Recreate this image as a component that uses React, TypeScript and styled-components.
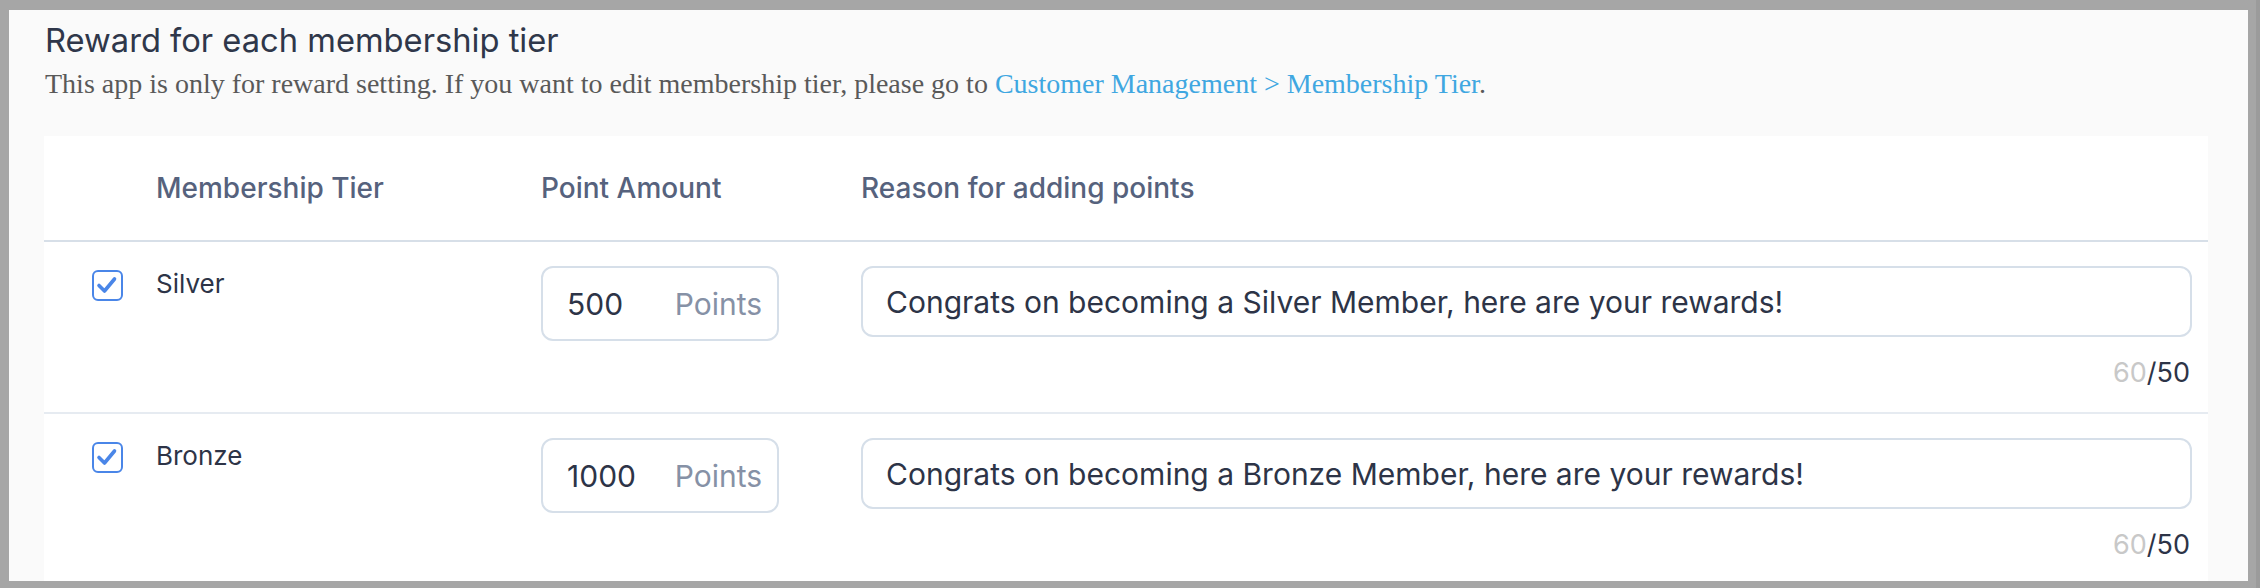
import React from 'react';
import styled, { createGlobalStyle } from 'styled-components';

const Global = createGlobalStyle`
  html, body { margin: 0; padding: 0; background: #a6a6a6; }
  body { width: 2260px; height: 588px; overflow: hidden; box-shadow: inset -4px 0 0 #9b9b9b; }
  * { box-sizing: border-box; }
`;

const SANS = `Inter, "Liberation Sans", Arial, sans-serif`;

const Frame = styled.div`
  margin: 10px 12px 0 9px;
  height: 571px;
  background: #fafafa;
  padding: 10px 40px 0 35px;
  overflow: hidden;
`;

const Title = styled.h1`
  margin: 0 0 0 1px;
  font-family: ${SANS};
  font-size: 32.7px;
  line-height: 40px;
  font-weight: 400;
  color: #2f374a;
`;

const Subtitle = styled.p`
  margin: 6px 0 0 1px;
  font-family: "Liberation Serif", "Times New Roman", serif;
  font-size: 28px;
  line-height: 36px;
  color: #595959;
`;

const Link = styled.a`
  color: #3fa7e1;
  text-decoration: none;
`;

const Card = styled.div`
  margin-top: 34px;
  background: #ffffff;
`;

const Grid = styled.div<{ $header?: boolean }>`
  display: grid;
  grid-template-columns: 64px 385px 320px 1fr;
  padding: ${(p) => (p.$header ? '0 16px 0 48px' : '24px 16px 19px 48px')};
  height: ${(p) => (p.$header ? '106px' : 'auto')};
  align-items: ${(p) => (p.$header ? 'center' : 'start')};
  border-bottom: 2px solid ${(p) => (p.$header ? '#d7dfe8' : '#e6ebf1')};
`;

const HeadCell = styled.div`
  font-family: ${SANS};
  font-size: 28px;
  line-height: 36px;
  font-weight: 500;
  color: #56627d;
`;

const CheckBox = styled.div`
  margin-top: 4px;
  width: 31px;
  height: 31px;
  border: 2px solid #4a86e8;
  border-radius: 6px;
  background: #fff;
  display: flex;
  align-items: center;
  justify-content: center;
`;

const TierName = styled.div`
  font-family: ${SANS};
  font-size: 26px;
  line-height: 36px;
  color: #2d3447;
`;

const PointBox = styled.div`
  width: 238px;
  height: 75px;
  border: 2px solid #d6dfe9;
  border-radius: 12px;
  display: flex;
  align-items: center;
  justify-content: space-between;
  padding: 0 15px 0 24px;
  font-family: ${SANS};
  font-size: 30px;
`;

const PointValue = styled.span`
  color: #2d3447;
`;

const PointUnit = styled.span`
  color: #8691a6;
`;

const ReasonCol = styled.div`
  display: flex;
  flex-direction: column;
`;

const ReasonBox = styled.div`
  height: 71px;
  border: 2px solid #d6dfe9;
  border-radius: 12px;
  display: flex;
  align-items: center;
  padding: 0 23px;
  font-family: ${SANS};
  font-size: 30px;
  color: #2d3447;
`;

const Counter = styled.div`
  margin-top: 16px;
  margin-right: 2px;
  text-align: right;
  font-family: ${SANS};
  font-size: 27px;
  line-height: 40px;
  color: #2d3447;
`;

const Over = styled.span`
  color: #c8c8c8;
`;

type Row = { tier: string; points: string; reason: string };

const rows: Row[] = [
  { tier: 'Silver', points: '500', reason: 'Congrats on becoming a Silver Member, here are your rewards!' },
  { tier: 'Bronze', points: '1000', reason: 'Congrats on becoming a Bronze Member, here are your rewards!' },
];

const Check = () => (
  <svg width="23" height="23" viewBox="0 0 23 23" fill="none">
    <path d="M3 11.5 L8.5 17 L18.5 5" stroke="#4a86e8" strokeWidth="3.6" strokeLinecap="round" strokeLinejoin="round" />
  </svg>
);

export default function App() {
  return (
    <>
      <Global />
      <Frame>
        <Title>Reward for each membership tier</Title>
        <Subtitle>
          This app is only for reward setting. If you want to edit membership tier, please go to{' '}
          <Link href="#">Customer Management &gt; Membership Tier</Link>.
        </Subtitle>
        <Card>
          <Grid $header>
            <div />
            <HeadCell>Membership Tier</HeadCell>
            <HeadCell>Point Amount</HeadCell>
            <HeadCell>Reason for adding points</HeadCell>
          </Grid>
          {rows.map((r) => (
            <Grid key={r.tier}>
              <CheckBox>
                <Check />
              </CheckBox>
              <TierName>{r.tier}</TierName>
              <PointBox>
                <PointValue>{r.points}</PointValue>
                <PointUnit>Points</PointUnit>
              </PointBox>
              <ReasonCol>
                <ReasonBox>{r.reason}</ReasonBox>
                <Counter>
                  <Over>60</Over>/50
                </Counter>
              </ReasonCol>
            </Grid>
          ))}
        </Card>
      </Frame>
    </>
  );
}
